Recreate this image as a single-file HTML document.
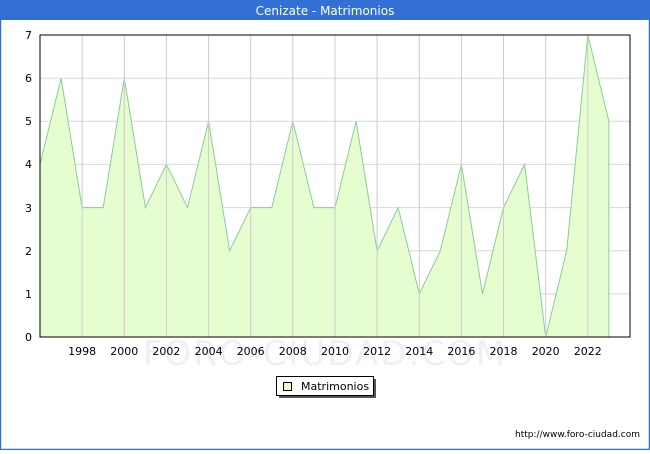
<!DOCTYPE html>
<html><head><meta charset="utf-8"><style>
body{margin:0;width:650px;height:450px;overflow:hidden;background:#fff;font-family:"DejaVu Sans","Liberation Sans",sans-serif}
</style></head><body>
<svg width="650" height="450" xmlns="http://www.w3.org/2000/svg" font-family="DejaVu Sans, Liberation Sans, sans-serif">
<rect x="0.5" y="0.5" width="649" height="449" fill="#fff" stroke="#3370d4" stroke-width="1.5"/>
<rect x="0" y="0" width="650" height="20" fill="#3370d4"/>
<text x="325" y="15" font-size="12" fill="#fff" text-anchor="middle">Cenizate - Matrimonios</text>
<text x="325" y="365" font-size="34" fill="#eef0f8" text-anchor="middle" letter-spacing="2">FORO-CIUDAD.COM</text>
<g stroke="#d8d8d8" stroke-width="1">
<line x1="40" x2="630" y1="293.9" y2="293.9"/><line x1="40" x2="630" y1="250.7" y2="250.7"/><line x1="40" x2="630" y1="207.6" y2="207.6"/><line x1="40" x2="630" y1="164.4" y2="164.4"/><line x1="40" x2="630" y1="121.3" y2="121.3"/><line x1="40" x2="630" y1="78.2" y2="78.2"/>
</g>
<polygon fill="#e6fdd0" stroke="#8ccc9c" stroke-width="1" points="40,337 40,164.4 61.1,78.2 82.1,207.6 103.2,207.6 124.3,78.2 145.4,207.6 166.4,164.4 187.5,207.6 208.6,121.3 229.6,250.7 250.7,207.6 271.8,207.6 292.8,121.3 313.9,207.6 335,207.6 356.1,121.3 377.1,250.7 398.2,207.6 419.3,293.9 440.3,250.7 461.4,164.4 482.5,293.9 503.5,207.6 524.6,164.4 545.7,337 566.7,250.7 587.8,35 608.9,121.3 608.9,337"/>
<g stroke="#cccccc" stroke-width="1">
<line x1="82.1" x2="82.1" y1="35" y2="337"/><line x1="124.3" x2="124.3" y1="35" y2="337"/><line x1="166.4" x2="166.4" y1="35" y2="337"/><line x1="208.6" x2="208.6" y1="35" y2="337"/><line x1="250.7" x2="250.7" y1="35" y2="337"/><line x1="292.8" x2="292.8" y1="35" y2="337"/><line x1="335" x2="335" y1="35" y2="337"/><line x1="377.1" x2="377.1" y1="35" y2="337"/><line x1="419.3" x2="419.3" y1="35" y2="337"/><line x1="461.4" x2="461.4" y1="35" y2="337"/><line x1="503.5" x2="503.5" y1="35" y2="337"/><line x1="545.7" x2="545.7" y1="35" y2="337"/><line x1="587.8" x2="587.8" y1="35" y2="337"/>
</g>
<rect x="40" y="35" width="590" height="302" fill="none" stroke="#000" stroke-width="1"/>
<g font-size="11" fill="#000" text-anchor="end">
<text x="32" y="341">0</text><text x="32" y="298">1</text><text x="32" y="255">2</text><text x="32" y="212">3</text><text x="32" y="168">4</text><text x="32" y="125">5</text><text x="32" y="82">6</text><text x="32" y="39">7</text>
</g>
<g font-size="11" fill="#000" text-anchor="middle">
<text x="82.1" y="355">1998</text><text x="124.3" y="355">2000</text><text x="166.4" y="355">2002</text><text x="208.6" y="355">2004</text><text x="250.7" y="355">2006</text><text x="292.8" y="355">2008</text><text x="335" y="355">2010</text><text x="377.1" y="355">2012</text><text x="419.3" y="355">2014</text><text x="461.4" y="355">2016</text><text x="503.5" y="355">2018</text><text x="545.7" y="355">2020</text><text x="587.8" y="355">2022</text>
</g>
<rect x="279" y="379" width="97" height="19" fill="#555"/>
<rect x="276.5" y="376.5" width="97" height="19" fill="#fff" stroke="#000"/>
<rect x="283.5" y="382.5" width="8" height="8" fill="#e6fdd0" stroke="#000"/>
<text x="301" y="390" font-size="11">Matrimonios</text>
<text x="640" y="437" font-size="9" text-anchor="end">http://www.foro-ciudad.com</text>
</svg>
</body></html>
